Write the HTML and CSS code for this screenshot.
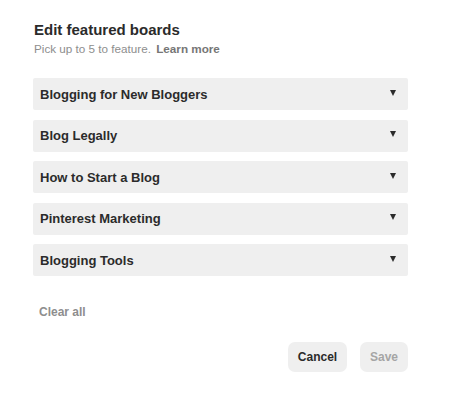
FILE: index.html
```html
<!DOCTYPE html>
<html>
<head>
<meta charset="utf-8">
<link rel="stylesheet" href="styles.css">
</head>
<body>
<div class="dialog">
  <h1 class="title">Edit featured boards</h1>
  <p class="subtitle">Pick up to 5 to feature. <span class="learn">Learn more</span></p>
  <ul class="boards">
    <li class="board"><span>Blogging for New Bloggers</span><span class="caret"></span></li>
    <li class="board"><span>Blog Legally</span><span class="caret"></span></li>
    <li class="board"><span>How to Start a Blog</span><span class="caret"></span></li>
    <li class="board"><span>Pinterest Marketing</span><span class="caret"></span></li>
    <li class="board"><span>Blogging Tools</span><span class="caret"></span></li>
  </ul>
  <div class="clear">Clear all</div>
  <div class="actions">
    <button class="btn cancel">Cancel</button>
    <button class="btn save">Save</button>
  </div>
</div>
</body>
</html>
```
FILE: styles.css
```css
html, body {
  margin: 0;
  padding: 0;
  background: #fff;
}
body {
  font-family: "Liberation Sans", Arial, sans-serif;
  color: #333;
}
.dialog {
  padding: 20px 66px 0 33px;
  width: 375px;
}
.title {
  margin: 0 0 0 1px;
  font-size: 15px;
  font-weight: bold;
  color: #2b2b2b;
  line-height: 20px;
}
.subtitle {
  margin: 1px 0 0 1px;
  font-size: 11.7px;
  line-height: 15px;
  color: #8e8e8e;
}
.learn {
  font-weight: bold;
  color: #767676;
  margin-left: 2px;
}
.boards {
  list-style: none;
  margin: 22px 0 0 0;
  padding: 0;
  display: flex;
  flex-direction: column;
  gap: 9.5px;
}
.board {
  height: 32px;
  background: #efefef;
  border-radius: 2px;
  display: flex;
  align-items: center;
  justify-content: space-between;
  padding: 0 12px 0 7px;
  font-size: 13px;
  font-weight: bold;
  color: #2b2b2b;
}
.caret {
  width: 0;
  height: 0;
  border-left: 3.5px solid transparent;
  border-right: 3.5px solid transparent;
  border-top: 6px solid #2b2b2b;
  margin-top: -3px;
}
.clear {
  margin: 29px 0 0 6px;
  font-size: 12px;
  font-weight: bold;
  color: #8e8e8e;
  line-height: 14px;
}
.actions {
  display: flex;
  justify-content: flex-end;
  gap: 13px;
  margin-top: 23px;
}
.btn {
  border: none;
  border-radius: 7px;
  background: #efefef;
  height: 30px;
  font-family: inherit;
  font-size: 12px;
  font-weight: bold;
  padding: 0;
}
.cancel {
  width: 59px;
  color: #2b2b2b;
}
.save {
  width: 48px;
  color: #a5a5a5;
}
```
